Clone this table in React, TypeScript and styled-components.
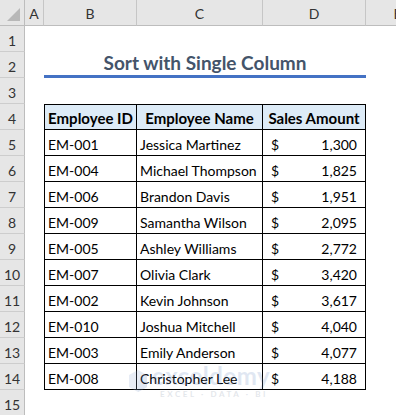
import styled, { createGlobalStyle } from "styled-components";

const GlobalStyle = createGlobalStyle`
    html, body {
        margin: 0;
        padding: 0;
        background: #fff;
        overflow: hidden;
    }
    body {
        font-family: Lato, "Liberation Sans", sans-serif;
    }
`;

const Sheet = styled.div`
    position: relative;
    display: grid;
    grid-template-columns: 25px 19px 93px 126px 103px 64px;
    grid-auto-rows: 26px;
    width: 396px;
    height: 415px;
    overflow: hidden;
    background: #fff;
`;

const Corner = styled.div`
    position: relative;
    background: #e6e6e6;
    border-right: 1px solid #bdbdbd;
    border-bottom: 1px solid #bdbdbd;
    box-sizing: border-box;

    &::after {
        content: "";
        position: absolute;
        right: 4px;
        bottom: 4px;
        width: 0;
        height: 0;
        border-left: 13px solid transparent;
        border-bottom: 13px solid #b8b8b8;
    }
`;

const ColHead = styled.div`
    display: flex;
    align-items: center;
    justify-content: center;
    background: #e6e6e6;
    border-right: 1px solid #c6c6c6;
    border-bottom: 1px solid #bdbdbd;
    box-sizing: border-box;
    font-size: 14px;
    color: #333;
    padding-top: 2px;
`;

const RowHead = styled.div`
    display: flex;
    align-items: flex-end;
    justify-content: center;
    background: #e6e6e6;
    border-right: 1px solid #bdbdbd;
    border-bottom: 1px solid #cdcdcd;
    box-sizing: border-box;
    font-size: 14px;
    color: #333;
    padding-bottom: 2px;
`;

const Blank = styled.div``;

const Title = styled.div`
    grid-column: 3 / span 3;
    display: flex;
    align-items: flex-end;
    justify-content: center;
    font-size: 19px;
    font-weight: 700;
    color: #44546a;
    border-bottom: 3px solid #4472c4;
    box-sizing: border-box;
    padding-bottom: 1px;
`;

const Cell = styled.div<{ head?: boolean; first?: boolean; top?: boolean }>`
    display: flex;
    align-items: flex-end;
    justify-content: ${props => props.head ? "center" : "flex-start"};
    background: ${props => props.head ? "#ddebf7" : "#fff"};
    border-right: 1px solid #000;
    border-bottom: 1px solid #000;
    border-left: ${props => props.first ? "1px solid #000" : "none"};
    border-top: ${props => props.top ? "1px solid #000" : "none"};
    box-sizing: border-box;
    font-size: ${props => props.head ? "15px" : "14px"};
    font-weight: ${props => props.head ? 700 : 400};
    color: #000;
    padding: 0 3px 2px;
    white-space: nowrap;
    overflow: hidden;
`;

const Money = styled(Cell)`
    justify-content: space-between;
    padding: 0 8px 2px 8px;
`;

const Watermark = styled.div`
    position: absolute;
    left: 128px;
    top: 364px;
    display: flex;
    align-items: center;
    gap: 4px;
    opacity: 0.2;
    pointer-events: none;
`;

const MarkText = styled.div`
    display: flex;
    flex-direction: column;
    line-height: 1;
`;

const MarkName = styled.span`
    font-size: 24px;
    font-weight: 700;
    color: #6b8bc0;
    letter-spacing: 0.5px;
`;

const MarkTag = styled.span`
    font-size: 8px;
    font-weight: 700;
    color: #7a8aa0;
    letter-spacing: 2.6px;
    margin-top: 2px;
    padding-left: 8px;
`;

const rows = [
    ["EM-001", "Jessica Martinez", "1,300"],
    ["EM-004", "Michael Thompson", "1,825"],
    ["EM-006", "Brandon Davis", "1,951"],
    ["EM-009", "Samantha Wilson", "2,095"],
    ["EM-005", "Ashley Williams", "2,772"],
    ["EM-007", "Olivia Clark", "3,420"],
    ["EM-002", "Kevin Johnson", "3,617"],
    ["EM-010", "Joshua Mitchell", "4,040"],
    ["EM-003", "Emily Anderson", "4,077"],
    ["EM-008", "Christopher Lee", "4,188"],
];

export default function App() {
    return (
        <>
            <GlobalStyle />
            <Sheet>
                <Corner />
                {["A", "B", "C", "D", "E"].map(c => <ColHead key={c}>{c}</ColHead>)}

                <RowHead>1</RowHead>
                <Blank /><Blank /><Blank /><Blank /><Blank />

                <RowHead>2</RowHead>
                <Blank />
                <Title>Sort with Single Column</Title>
                <Blank />

                <RowHead>3</RowHead>
                <Blank /><Blank /><Blank /><Blank /><Blank />

                <RowHead>4</RowHead>
                <Blank />
                <Cell head first top>Employee ID</Cell>
                <Cell head top>Employee Name</Cell>
                <Cell head top>Sales Amount</Cell>
                <Blank />

                {rows.map((r, i) => [
                    <RowHead key={"h" + i}>{i + 5}</RowHead>,
                    <Blank key={"a" + i} />,
                    <Cell key={"b" + i} first>{r[0]}</Cell>,
                    <Cell key={"c" + i}>{r[1]}</Cell>,
                    <Money key={"d" + i}><span>$</span><span>{r[2]}</span></Money>,
                    <Blank key={"e" + i} />,
                ])}

                <RowHead>15</RowHead>
                <Blank /><Blank /><Blank /><Blank /><Blank />

                <Watermark>
                    <svg width="20" height="24" viewBox="0 0 20 24">
                        <path d="M10 1 L19 6 L19 18 L10 23 L1 18 L1 6 Z" fill="#8aa4cf" />
                        <path d="M10 12 L19 6 L19 18 L10 23 Z" fill="#6b8bc0" />
                    </svg>
                    <MarkText>
                        <MarkName>exceldemy</MarkName>
                        <MarkTag>EXCEL · DATA · BI</MarkTag>
                    </MarkText>
                </Watermark>
            </Sheet>
        </>
    );
}
